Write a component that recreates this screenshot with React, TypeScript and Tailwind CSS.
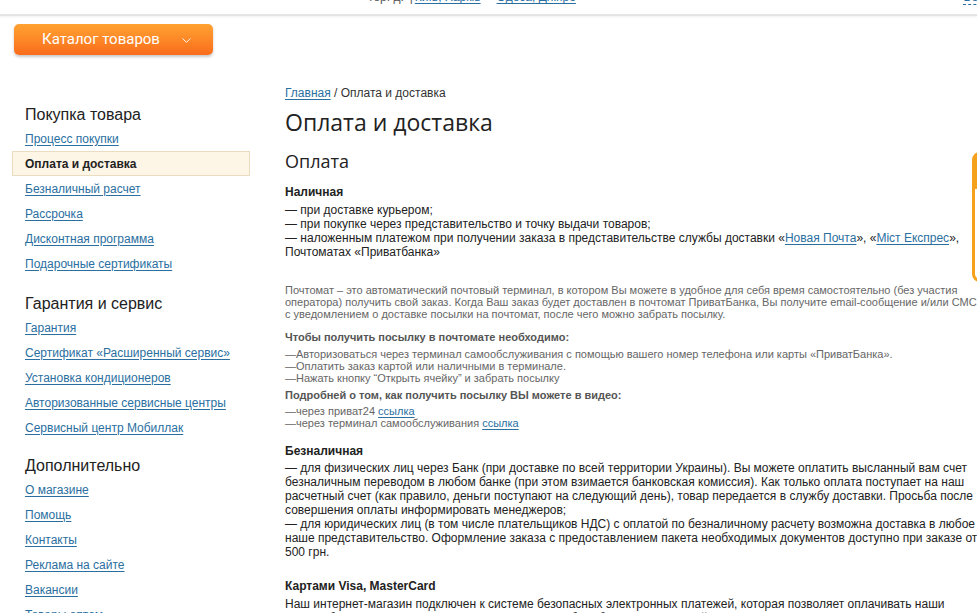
import { ChevronDown } from 'lucide-react';

const LINK = 'text-[#2a6f9f] underline underline-offset-2 decoration-[#2a6f9f]';

const SECTIONS = [
  {
    title: 'Покупка товара',
    mt: '',
    links: [
      'Процесс покупки',
      'Оплата и доставка',
      'Безналичный расчет',
      'Рассрочка',
      'Дисконтная программа',
      'Подарочные сертификаты',
    ],
  },
  {
    title: 'Гарантия и сервис',
    mt: 'mt-[16px]',
    links: [
      'Гарантия',
      'Сертификат «Расширенный сервис»',
      'Установка кондиционеров',
      'Авторизованные сервисные центры',
      'Сервисный центр Мобиллак',
    ],
  },
  {
    title: 'Дополнительно',
    mt: 'mt-[14px]',
    links: ['О магазине', 'Помощь', 'Контакты', 'Реклама на сайте', 'Вакансии', 'Товары оптом'],
  },
];

function Sidebar() {
  return (
    <aside className="w-[238px] shrink-0 ml-[12px] pt-[17px]">
      {SECTIONS.map((s) => (
        <div key={s.title} className={s.mt}>
          <div className="px-[13px] h-[23px] leading-[23px] text-[16px] text-[#222]">{s.title}</div>
          {s.links.map((l) =>
            l === 'Оплата и доставка' ? (
              <div
                key={l}
                className="h-[25px] flex items-center px-[12px] border border-[#e9dcc0] bg-[#fdf5e5] text-[12px] font-bold text-[#222]"
              >
                {l}
              </div>
            ) : (
              <div key={l} className="h-[25px] flex items-center px-[13px] text-[12px]">
                <a href="#" className={LINK}>
                  {l}
                </a>
              </div>
            )
          )}
        </div>
      ))}
    </aside>
  );
}

function Content() {
  return (
    <main className="w-[695px] shrink-0 ml-[35px] text-[#222]">
      <div className="text-[12px] leading-[14px] text-[#333]">
        <a href="#" className={LINK}>
          Главная
        </a>{' '}
        / Оплата и доставка
      </div>
      <h1 className="mt-[7px] text-[23px] leading-[30px] text-[#222] font-['Open_Sans',sans-serif]">
        Оплата и доставка
      </h1>
      <h2 className="mt-[12px] text-[18px] leading-[24px] text-[#222] font-['Open_Sans',sans-serif]">Оплата</h2>

      <div className="mt-[12px] text-[12px] leading-[14px] font-bold">Наличная</div>
      <p className="mt-[4px] text-[12px] leading-[14px]">
        — при доставке курьером;
        <br />— при покупке через представительство и точку выдачи товаров;
        <br />— наложенным платежом при получении заказа в представительстве службы доставки «
        <a href="#" className={LINK}>
          Новая Почта
        </a>
        », «
        <a href="#" className={LINK}>
          Міст Експрес
        </a>
        », Почтоматах «Приватбанка»
      </p>

      <div className="text-[11px] text-[#666]">
        <p className="mt-[25px] leading-[12px]">
          Почтомат – это автоматический почтовый терминал, в котором Вы можете в удобное для себя время самостоятельно
          (без участия оператора) получить свой заказ. Когда Ваш заказ будет доставлен в почтомат ПриватБанка, Вы
          получите email-сообщение и/или СМС с уведомлением о доставке посылки на почтомат, после чего можно забрать
          посылку.
        </p>
        <div className="mt-[10px] leading-[14px] font-bold text-[#555]">Чтобы получить посылку в почтомате необходимо:</div>
        <p className="mt-[4px] leading-[12px]">
          —Авторизоваться через терминал самообслуживания с помощью вашего номер телефона или карты «ПриватБанка».
          <br />—Оплатить заказ картой или наличными в терминале.
          <br />—Нажать кнопку “Открыть ячейку” и забрать посылку
        </p>
        <div className="mt-[4px] leading-[14px] font-bold text-[#555]">
          Подробней о том, как получить посылку ВЫ можете в видео:
        </div>
        <p className="mt-[3px] leading-[12px]">
          —через приват24{' '}
          <a href="#" className={LINK}>
            ссылка
          </a>
          <br />—через терминал самообслуживания{' '}
          <a href="#" className={LINK}>
            ссылка
          </a>
        </p>
      </div>

      <div className="mt-[15px] text-[12px] leading-[14px] font-bold">Безналичная</div>
      <p className="mt-[3px] text-[12px] leading-[14px]">
        — для физических лиц через Банк (при доставке по всей территории Украины). Вы можете оплатить высланный вам счет
        безналичным переводом в любом банке (при этом взимается банковская комиссия). Как только оплата поступает на наш
        расчетный счет (как правило, деньги поступают на следующий день), товар передается в службу доставки. Просьба
        после совершения оплаты информировать менеджеров;
        <br />— для юридических лиц (в том числе плательщиков НДС) с оплатой по безналичному расчету возможна доставка в
        любое наше представительство. Оформление заказа с предоставлением пакета необходимых документов доступно при
        заказе от 500 грн.
      </p>

      <div className="mt-[20px] text-[12px] leading-[14px] font-bold">Картами Visa, MasterCard</div>
      <p className="mt-[4px] text-[12px] leading-[14px]">
        Наш интернет-магазин подключен к системе безопасных электронных платежей, которая позволяет оплачивать наши
        товары банковскими картами Visa и MasterCard любого банка прямо на сайте.
      </p>
    </main>
  );
}

export default function App() {
  return (
    <div className="relative w-full h-[613px] overflow-hidden bg-white font-['Liberation_Sans',Arial,sans-serif]">
      <header className="h-[16px] border-b-2 border-[#e4e4e4] shadow-[0_1px_2px_rgba(0,0,0,0.06)] overflow-hidden">
        <div className="flex -mt-[10px] text-[12px] leading-[14px] text-[#555]">
          <span className="ml-[368px]">тер. д.</span>
          <span className="ml-[6px]">|</span>
          <a href="#" className={`ml-[2px] ${LINK}`}>
            Київ, Харків
          </a>
          <a href="#" className={`ml-[16px] ${LINK}`}>
            Одеса, Дніпро
          </a>
          <a href="#" className="ml-auto mr-[-20px] text-[#2a6f9f] border-b border-dashed border-[#2a6f9f]">
            Войти
          </a>
        </div>
      </header>

      <div className="pl-[14px] pt-[8px]">
        <button className="w-[199px] h-[31px] rounded-[5px] bg-gradient-to-b from-[#ffa231] to-[#f96b1b] shadow-[0_2px_3px_rgba(0,0,0,0.22)] flex items-center pl-[28px] text-white text-[15px] font-['Roboto',sans-serif]">
          Каталог товаров
          <ChevronDown size={15} strokeWidth={1.5} className="ml-[19px] mt-[1px]" />
        </button>
      </div>

      <div className="mt-[31px] flex">
        <Sidebar />
        <Content />
      </div>

      <div className="absolute left-[972px] top-[152px] w-[40px] h-[130px] border-[3px] border-[#f6a11c] rounded-l-[8px] bg-white">
        <div className="h-[34px] bg-[#f6a11c]" />
      </div>
    </div>
  );
}
